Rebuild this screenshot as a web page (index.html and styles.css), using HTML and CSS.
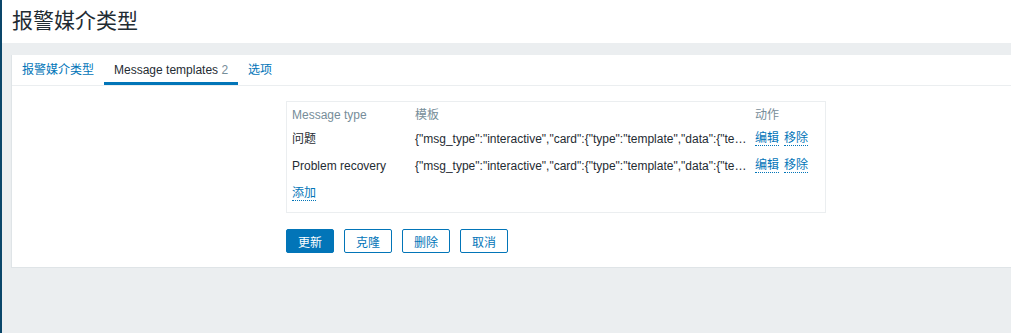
FILE: index.html
```html
<!DOCTYPE html>
<html lang="zh-CN">
<head>
    <meta charset="UTF-8">
    <meta name="viewport" content="width=device-width, initial-scale=1.0">
    <title>报警媒介类型</title>
    <link rel="stylesheet" href="styles.css">
</head>
<body>
    <div class="sidebar"></div>

    <div class="main">
        <header class="page-header">
            <h1>报警媒介类型</h1>
        </header>

        <div class="content">
            <div class="card">
                <ul class="tabs">
                    <li><a href="#">报警媒介类型</a></li>
                    <li class="active">Message templates <span class="count">2</span></li>
                    <li><a href="#">选项</a></li>
                </ul>

                <div class="tab-body">
                    <div class="form-row">
                        <div class="form-label"></div>
                        <div class="table-box">
                            <table class="templates">
                                <colgroup>
                                    <col class="col-type">
                                    <col class="col-template">
                                    <col class="col-action">
                                </colgroup>
                                <thead>
                                    <tr>
                                        <th>Message type</th>
                                        <th>模板</th>
                                        <th>动作</th>
                                    </tr>
                                </thead>
                                <tbody>
                                    <tr>
                                        <td>问题</td>
                                        <td class="template-text">{"msg_type":"interactive","card":{"type":"template","data":{"template_id":"AAqkz9B8YzUtb","template_variable":{}}}}</td>
                                        <td class="actions"><a href="#" class="link">编辑</a><a href="#" class="link">移除</a></td>
                                    </tr>
                                    <tr>
                                        <td>Problem recovery</td>
                                        <td class="template-text">{"msg_type":"interactive","card":{"type":"template","data":{"template_id":"AAqkz9B8YzUtb","template_variable":{}}}}</td>
                                        <td class="actions"><a href="#" class="link">编辑</a><a href="#" class="link">移除</a></td>
                                    </tr>
                                    <tr>
                                        <td colspan="3"><a href="#" class="link">添加</a></td>
                                    </tr>
                                </tbody>
                            </table>
                        </div>
                    </div>

                    <div class="form-row buttons-row">
                        <div class="form-label"></div>
                        <div class="buttons">
                            <button class="btn primary">更新</button>
                            <button class="btn">克隆</button>
                            <button class="btn">删除</button>
                            <button class="btn">取消</button>
                        </div>
                    </div>
                </div>
            </div>
        </div>
    </div>
</body>
</html>
```

FILE: styles.css
```css
html, body {
    height: 100%;
}
body {
    margin: 0;
    display: flex;
    background-color: #ebeef0;
    font-family: "Liberation Sans", Arial, "Noto Sans CJK SC", sans-serif;
    font-size: 12px;
    color: #1f2c33;
    overflow: hidden;
}
.sidebar {
    width: 2px;
    flex-shrink: 0;
    background-color: #0a466a;
}
.main {
    flex: 1;
    min-width: 0;
    overflow: hidden;
}
.page-header {
    background-color: #fff;
    height: 43px;
    padding-left: 10px;
}
.page-header h1 {
    margin: 0;
    font-size: 21px;
    font-weight: normal;
    line-height: 42px;
    color: #1f2c33;
}
.content {
    padding: 12px 0 0 9px;
}
.card {
    background-color: #fff;
    border: 1px solid #dfe4e7;
    border-top: none;
    margin-right: -20px;
}
.tabs {
    list-style: none;
    margin: 0;
    padding: 0;
    display: flex;
    border-bottom: 1px solid #ebeef0;
}
.tabs li {
    padding: 0 10px;
    line-height: 30px;
}
.tabs li.active {
    box-shadow: inset 0 -3px 0 #0275b8;
}
.tabs a {
    color: #0275b8;
    text-decoration: none;
}
.count {
    color: #768d99;
}
.tab-body {
    padding: 15px 10px 14px;
}
.form-row {
    display: grid;
    grid-template-columns: 264px 540px;
}
.table-box {
    border: 1px solid #ebeef0;
    padding-bottom: 6px;
}
.templates {
    width: 100%;
    border-collapse: collapse;
    table-layout: fixed;
}
.col-type {
    width: 123px;
}
.col-action {
    width: 75px;
}
.templates th {
    text-align: left;
    font-weight: normal;
    color: #768d99;
    padding: 6px 5px 3px;
    line-height: 14px;
}
.templates td {
    height: 27px;
    padding: 0 5px;
    line-height: 14px;
    vertical-align: middle;
    white-space: nowrap;
}
.templates td.template-text {
    overflow: hidden;
    text-overflow: ellipsis;
    padding-right: 3px;
}
.link {
    color: #0275b8;
    text-decoration: none;
    border-bottom: 1px dotted #0275b8;
}
.actions .link {
    display: inline-block;
    margin-right: 5px;
}
.buttons-row {
    margin-top: 16px;
}
.buttons {
    display: flex;
    gap: 10px;
}
.btn {
    height: 24px;
    padding: 0 11px;
    font-family: inherit;
    font-size: 12px;
    color: #0275b8;
    background-color: #fff;
    border: 1px solid #0275b8;
    border-radius: 2px;
    cursor: pointer;
}
.btn.primary {
    color: #fff;
    background-color: #0275b8;
}
```
